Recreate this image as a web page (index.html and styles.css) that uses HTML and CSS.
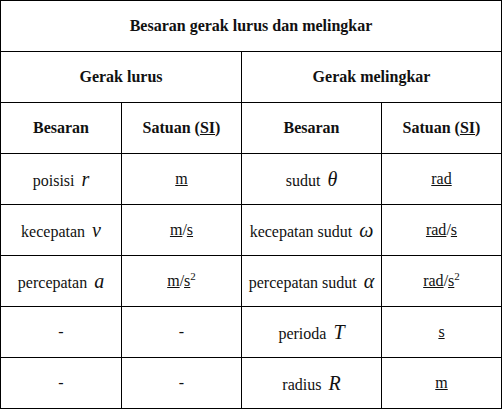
FILE: index.html
```html
<!DOCTYPE html>
<html lang="id">
<head>
<meta charset="utf-8">
<title>Besaran gerak lurus dan melingkar</title>
<link rel="stylesheet" href="styles.css">
</head>
<body>
<table class="tbl">
  <colgroup>
    <col class="c1"><col class="c2"><col class="c3"><col class="c4">
  </colgroup>
  <tr><th colspan="4">Besaran gerak lurus dan melingkar</th></tr>
  <tr><th colspan="2">Gerak lurus</th><th colspan="2">Gerak melingkar</th></tr>
  <tr>
    <th>Besaran</th><th>Satuan (<a class="lk">SI</a>)</th>
    <th>Besaran</th><th>Satuan (<a class="lk">SI</a>)</th>
  </tr>
  <tr>
    <td>poisisi <i class="mv">r</i></td><td><a class="lk">m</a></td>
    <td>sudut <i class="mv">θ</i></td><td><a class="lk">rad</a></td>
  </tr>
  <tr>
    <td>kecepatan <i class="mv">v</i></td><td><a class="lk">m</a>/<a class="lk">s</a></td>
    <td>kecepatan sudut <i class="mv">ω</i></td><td><a class="lk">rad</a>/<a class="lk">s</a></td>
  </tr>
  <tr>
    <td>percepatan <i class="mv">a</i></td><td><a class="lk">m</a>/<a class="lk">s</a><sup>2</sup></td>
    <td>percepatan sudut <i class="mv">α</i></td><td><a class="lk">rad</a>/<a class="lk">s</a><sup>2</sup></td>
  </tr>
  <tr>
    <td>-</td><td>-</td>
    <td>perioda <i class="mv">T</i></td><td><a class="lk">s</a></td>
  </tr>
  <tr>
    <td>-</td><td>-</td>
    <td>radius <i class="mv">R</i></td><td><a class="lk">m</a></td>
  </tr>
</table>
</body>
</html>
```
FILE: styles.css
```css
html, body {
  margin: 0;
  padding: 0;
  background: #fff;
}
.tbl {
  border-collapse: collapse;
  table-layout: fixed;
  width: 501px;
  font-family: "Liberation Serif", "Times New Roman", serif;
  font-size: 16px;
  color: #111;
}
.c1 { width: 121px; }
.c2 { width: 120px; }
.c3 { width: 140px; }
.c4 { width: 120px; }
.tbl th, .tbl td {
  border: 1px solid #000;
  height: 50px;
  padding: 0;
  text-align: center;
  vertical-align: middle;
  white-space: nowrap;
}
.tbl th {
  font-weight: bold;
}
.lk {
  color: #111;
  text-decoration: underline;
}
.mv {
  font-size: 20px;
  margin-left: 3px;
}
sup {
  font-size: 11px;
  vertical-align: 6px;
  line-height: 0;
}
```
